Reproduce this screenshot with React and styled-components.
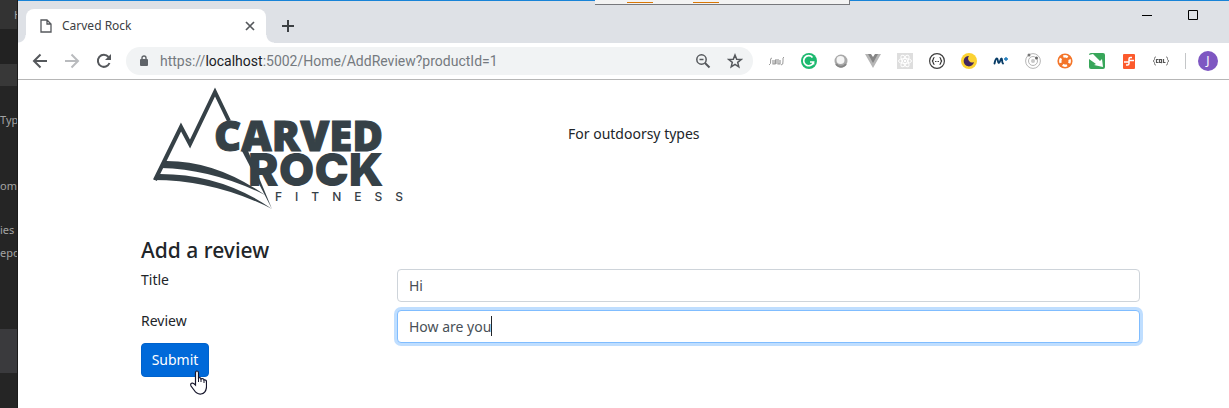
import React, { useState } from "react";
import styled, { createGlobalStyle, css } from "styled-components";

const Global = createGlobalStyle`
  *, *::before, *::after { box-sizing: border-box; }
  body {
    margin: 0;
    background: #252525;
    color: #212529;
    font: 14px/22px "Noto Sans", "Open Sans", sans-serif;
  }
  button, input { font: inherit; }
`;

const Desktop = styled.div`
  display: flex;
  min-height: 100vh;
`;

/* Editor window that shows behind the browser */
const Editor = styled.aside`
  flex: 0 0 18px;
  width: 18px;
  display: flex;
  flex-direction: column;
  overflow: hidden;
  background: #252525;
  border-right: 1px solid #1c1c1c;
  color: #a3a3a3;
  font-size: 11px;
  line-height: 22px;
  white-space: nowrap;
`;
const Strip = styled.div`
  flex: 0 0 ${(p) => p.$size}px;
  background: ${(p) => p.$tone || "transparent"};
  padding-left: ${(p) => p.$indent || 0}px;
  padding-top: ${(p) => p.$top || 0}px;
`;

const Browser = styled.div`
  flex: 1;
  min-width: 0;
  display: flex;
  flex-direction: column;
  position: relative;
  background: #fff;
  border-top: 1px solid #1883d7;
`;
const Popup = styled.div`
  position: absolute;
  top: -1px;
  left: 577px;
  width: 255px;
  height: 5px;
  padding: 2px 0 0 32px;
  display: flex;
  gap: 40px;
  background: #f3f3f3;
  border: solid #77787c;
  border-width: 0 1px 1px 0;
`;
const PopupMark = styled.span`
  width: 26px;
  height: 1px;
  background: #d97706;
`;

const TabBar = styled.div`
  display: flex;
  align-items: flex-end;
  height: 42px;
  padding-left: 8px;
  background: #dee1e6;
`;
const Tab = styled.div`
  position: relative;
  display: flex;
  align-items: center;
  width: 240px;
  height: 34px;
  padding: 0 8px 0 14px;
  gap: 10px;
  background: #fff;
  border-radius: 8px 8px 0 0;
  color: #3c4043;
  font-size: 12px;
  &::before, &::after {
    content: "";
    position: absolute;
    bottom: 0;
    width: 8px;
    height: 8px;
  }
  &::before {
    right: 100%;
    background: radial-gradient(circle at 0 0, #dee1e6 7px, #fff 8px);
  }
  &::after {
    left: 100%;
    background: radial-gradient(circle at 100% 0, #dee1e6 7px, #fff 8px);
  }
`;
const TabTitle = styled.span`
  flex: 1;
`;
const IconButton = styled.button`
  display: grid;
  place-items: center;
  flex: none;
  width: 16px;
  height: 16px;
  padding: 0;
  border: 0;
  background: none;
  color: #55585c;
  &:disabled { color: #b9bbbe; }
  svg { display: block; }
`;
const NewTab = styled(IconButton)`
  margin: 0 0 9px 14px;
`;
const WindowButtons = styled.div`
  display: flex;
  gap: 30px;
  margin: 0 28px 20px auto;
  button { color: #000; }
`;

const Toolbar = styled.div`
  display: flex;
  align-items: center;
  height: 37px;
  padding: 0 11px 0 14px;
  border-bottom: 1px solid #b6b6b6;
`;
const NavButtons = styled.div`
  display: flex;
  gap: 16px;
  margin-right: 14px;
`;
const AddressBar = styled.div`
  flex: 1;
  min-width: 0;
  display: flex;
  align-items: center;
  gap: 16px;
  height: 28px;
  padding: 0 10px 0 12px;
  border-radius: 14px;
  background: #f1f3f4;
`;
const Address = styled.div`
  flex: 1;
  min-width: 0;
  margin-left: -6px;
  overflow: hidden;
  white-space: nowrap;
  font-family: Roboto, "Noto Sans", sans-serif;
  color: #757a7f;
  b { font-weight: 400; color: #202124; }
`;
const Extensions = styled.div`
  display: flex;
  gap: 16px;
  margin-left: 16px;
`;
const Avatar = styled.button`
  width: 20px;
  height: 20px;
  margin-left: 12px;
  padding: 0;
  border: 0;
  border-radius: 50%;
  background: #7e57c2;
  color: #fff;
  font-size: 12px;
  line-height: 20px;
`;
const Divider = styled.span`
  width: 1px;
  height: 16px;
  margin-left: 16px;
  background: #c4c6c8;
`;

const Page = styled.main`
  flex: 1;
  padding: 4px 89px 30px 123px;
`;
const Header = styled.header`
  display: grid;
  grid-template-columns: 427px 1fr;
  height: 132px;
  p { margin: 39px 0 0; }
`;
const Logo = styled.svg`
  display: block;
  margin-left: 8px;
`;
const Heading = styled.h1`
  margin: 19px 0 4px;
  font-size: 21px;
  line-height: 30px;
  font-weight: 500;
`;
const Form = styled.form`
  display: flex;
  flex-direction: column;
`;
const Row = styled.div`
  display: grid;
  grid-template-columns: 256px 1fr;
  align-items: start;
  height: 33px;
  margin-bottom: ${(p) => (p.$last ? 0 : 8)}px;
`;
const InputWrap = styled.div`
  position: relative;
`;
const Input = styled.input`
  display: block;
  width: 100%;
  height: 33px;
  padding: 0 11px;
  border: 1px solid #ced4da;
  border-radius: 4px;
  background: #fff;
  color: #495057;
  outline: 0;
  ${(p) =>
    p.$active &&
    css`
      border-color: #80bdff;
      box-shadow: 0 0 0 3px rgba(0, 123, 255, 0.25);
    `}
`;
const Caret = styled.span`
  position: absolute;
  top: 6px;
  left: 94px;
  width: 1px;
  height: 20px;
  background: #212529;
`;
const Actions = styled.div`
  position: relative;
`;
const Submit = styled.button`
  display: block;
  width: 68px;
  height: 34px;
  padding: 0;
  border: 1px solid #0062cc;
  border-radius: 4px;
  background: #0069d9;
  color: #fff;
`;
const Pointer = styled.svg`
  position: absolute;
  top: 27px;
  left: 49px;
`;

const Icon = ({ size = 16, children, ...rest }) => (
  <svg width={size} height={size} viewBox={`0 0 ${size} ${size}`} fill="none" aria-hidden="true" {...rest}>
    {children}
  </svg>
);

const extensions = [
  ["Braces", <Icon><g stroke="#9a9a9a"><path d="M3 5Q1 5 1.600 8T0 12M15 4Q13.500 4 14 8T12 12" /><path d="M4 7v4h2V7M7 6v5M9 6v5h2V7" strokeWidth="1.200" /></g></Icon>],
  ["Grammar", <Icon><circle cx="8" cy="8" r="8" fill="#1db96f" /><path d="M11.500 4.500A5 5 0 1 0 12.500 9H9M12.500 9v2.500" stroke="#fff" strokeWidth="1.700" /></Icon>],
  ["Lens", <Icon><circle cx="8" cy="8" r="6.500" fill="#a9a9a9" /><path d="M3 11a6 6 0 0 0 10 0" stroke="#858585" strokeWidth="2" /><circle cx="7.500" cy="7" r="4" fill="#f5f5f5" /></Icon>],
  ["Vue", <Icon><path d="M0 1h4l4 7 4-7h4L8 15z" fill="#b6b6b6" /><path d="M3 1h3l2 3 2-3h3L8 10z" fill="#858585" /></Icon>],
  ["React", <Icon><path d="M0 0h16v16H0z" fill="#dedede" /><g stroke="#fff"><ellipse cx="8" cy="8" rx="6.500" ry="2.500" /><ellipse cx="8" cy="8" rx="6.500" ry="2.500" transform="rotate(60 8 8)" /><ellipse cx="8" cy="8" rx="6.500" ry="2.500" transform="rotate(120 8 8)" /></g><circle cx="8" cy="8" r="1.200" fill="#fff" /></Icon>],
  ["JSON", <Icon><circle cx="8" cy="8" r="7.400" stroke="#3f3f3f" strokeWidth="1.200" /><path d="M5.500 4.500C3.500 4.500 5 7.500 3 8c2 .5.500 3.500 2.500 3.500M10.500 4.500c2 0 .5 3 2.500 3.500-2 .5-.5 3.500-2.500 3.500" stroke="#333" strokeWidth="1.200" /><path d="M6 8.500h4" stroke="#444" strokeDasharray="1 .5" /></Icon>],
  ["Dark mode", <Icon><circle cx="8" cy="8" r="8" fill="#fbd232" /><path d="M8 3a4 4 0 0 0 5 6A5.200 5.200 0 1 1 8 3z" fill="#42265f" /></Icon>],
  ["Movistar", <Icon><path d="M1.500 10.500C2 8 3 5.500 4 5.500c1.200 0 .5 4.500 1.800 4.500s1.500-4.500 2.700-4.500S8.500 10 10 10.500" stroke="#073b66" strokeWidth="1.900" strokeLinecap="round" /><path d="M11 6h4M13 4v4" stroke="#1678ba" strokeWidth="1.300" /></Icon>],
  ["Orbit", <Icon><g stroke="#b5b5b5"><circle cx="8" cy="8" r="7.400" /><circle cx="8" cy="8" r="4.500" /></g><circle cx="8" cy="8" r="2" fill="#c8c8c8" /><circle cx="4" cy="2" r="1.500" fill="#777" /><circle cx="11.500" cy="5" r="1.500" fill="#666" /></Icon>],
  ["Support", <Icon><circle cx="8" cy="8" r="7.600" fill="#f47529" /><circle cx="8" cy="8" r="4.700" stroke="#fff" strokeWidth="2.400" strokeDasharray="4.600 2.780" strokeDashoffset="2.300" /></Icon>],
  ["Compass", <Icon><rect width="16" height="16" rx="2" fill="#38a65a" /><path d="M0 2l4-1 7 7 2-2 1 8-9-2 2-1-7-5z" fill="#fff" /></Icon>],
  ["Switch", <Icon><rect x="2" y="1" width="12" height="15" rx="1" fill="#fc5a2c" /><path d="M11 4.500H9.500Q8 4.500 8 6V10.500Q8 12 6.500 12H5M3 9h5M8 7.500h5" stroke="#fff" strokeWidth="1.500" /></Icon>],
  ["Query", <Icon><g stroke="#555"><path d="M3 4C0 4 3 7 0 8c3 1 0 4 3 4M13 4c3 0 0 3 3 4-3 1 0 4-3 4" strokeWidth=".8" /><path d="M5.500 6.500h-2v3h2M6.500 6.500h2v3h-2zM8 9l1 1M10.500 6v3.500h2" strokeWidth="1.200" /></g></Icon>],
];

function CarvedRockLogo() {
  return (
    <Logo width="260" height="130" viewBox="149 84 260 130" role="img" aria-label="Carved Rock Fitness">
      <path d="M155 180L181 127L190 144L215 92L229 121" fill="none" stroke="#364147" strokeWidth="4" />
      <g fill="#364147">
        <path d="M164 161Q215 160 265 195Q212 169 161 168Z" />
        <path d="M153 180L160 174Q222 174 272 209Q215 180 153 180Z" />
        <path d="M242 151H248L272 209Z" />
        <text x="214" y="151" fontFamily='"Open Sans", sans-serif' fontWeight="800" fontSize="42" stroke="#364147">CARVED</text>
        <text x="248" y="186" fontFamily="Inter, sans-serif" fontWeight="900" fontSize="46">ROCK</text>
        <text x="275" y="201" fontFamily="Inter, sans-serif" fontWeight="500" fontSize="12" letterSpacing="13">FITNESS</text>
      </g>
    </Logo>
  );
}

export default function App() {
  const [title, setTitle] = useState("Hi");
  const [review, setReview] = useState("How are you");
  return (
    <>
      <Global />
      <Desktop>
        <Editor>
          <Strip $size={29} $tone="#333" $indent={14} $top={4}>H</Strip>
          <Strip $size={35} $tone="#222" />
          <Strip $size={22} $tone="#383838" />
          <Strip $size={66} $top={23}>Type</Strip>
          <Strip $size={66} $top={23}>ome</Strip>
          <Strip $size={22} $top={1}>ies</Strip>
          <Strip $size={88} $top={1}>epo</Strip>
          <Strip $size={44} $tone="#3a3a3d" />
        </Editor>
        <Browser>
          <TabBar>
            <Tab>
              <Icon size={12} height="14" viewBox="0 0 12 14" stroke="#55585c" strokeWidth="1.300">
                <path d="M1 1h6l4 4v8H1zM7 1v4h4" />
              </Icon>
              <TabTitle>Carved Rock</TabTitle>
              <IconButton aria-label="Close tab">
                <Icon stroke="currentColor" strokeWidth="1.700"><path d="M4 4l8 8M12 4l-8 8" /></Icon>
              </IconButton>
            </Tab>
            <NewTab aria-label="New tab">
              <Icon stroke="#3c4043" strokeWidth="2"><path d="M8 2v12M2 8h12" /></Icon>
            </NewTab>
            <WindowButtons>
              <IconButton aria-label="Minimize">
                <Icon stroke="currentColor"><path d="M3 8.500h10" /></Icon>
              </IconButton>
              <IconButton aria-label="Maximize">
                <Icon stroke="currentColor"><path d="M3.500 3.500h9v9h-9z" /></Icon>
              </IconButton>
            </WindowButtons>
          </TabBar>
          <Toolbar>
            <NavButtons>
              <IconButton aria-label="Back">
                <Icon stroke="currentColor" strokeWidth="2"><path d="M15 8H2M8.500 1.500L2 8l6.500 6.500" /></Icon>
              </IconButton>
              <IconButton aria-label="Forward" disabled>
                <Icon stroke="currentColor" strokeWidth="2"><path d="M1 8h13M7.500 1.500L14 8l-6.500 6.500" /></Icon>
              </IconButton>
              <IconButton aria-label="Reload">
                <Icon><path d="M13.500 10A6 6 0 1 1 12.500 4" stroke="currentColor" strokeWidth="2" /><path d="M15 1v6H9z" fill="currentColor" /></Icon>
              </IconButton>
            </NavButtons>
            <AddressBar>
              <Icon size={12}>
                <rect x="2" y="4" width="8" height="7" rx="1" fill="#5f6368" />
                <path d="M4 5V3a2 2 0 0 1 4 0v2" stroke="#5f6368" strokeWidth="1.400" />
              </Icon>
              <Address>https://<b>localhost</b>:5002/Home/AddReview?productId=1</Address>
              <IconButton aria-label="Zoom">
                <Icon stroke="currentColor" strokeWidth="1.500"><circle cx="6.500" cy="6.500" r="4.700" /><path d="M10 10l4.500 4.500" strokeWidth="2" /><path d="M4.500 6.500h4" /></Icon>
              </IconButton>
              <IconButton aria-label="Bookmark this page">
                <Icon stroke="currentColor" strokeWidth="1.500"><path d="M8 2l1.700 4.200 4.500.3-3.500 2.900 1.100 4.400L8 11.400l-3.800 2.400 1.100-4.400-3.500-2.900 4.500-.3z" /></Icon>
              </IconButton>
            </AddressBar>
            <Extensions>
              {extensions.map(([name, drawing]) => (
                <IconButton key={name} aria-label={name}>{drawing}</IconButton>
              ))}
            </Extensions>
            <Divider />
            <Avatar aria-label="Profile">J</Avatar>
          </Toolbar>
          <Page>
            <Header>
              <CarvedRockLogo />
              <p>For outdoorsy types</p>
            </Header>
            <Heading>Add a review</Heading>
            <Form onSubmit={(e) => e.preventDefault()}>
              <Row>
                <label htmlFor="title">Title</label>
                <Input id="title" value={title} onChange={(e) => setTitle(e.target.value)} />
              </Row>
              <Row $last>
                <label htmlFor="review">Review</label>
                <InputWrap>
                  <Input id="review" $active value={review} onChange={(e) => setReview(e.target.value)} />
                  <Caret />
                </InputWrap>
              </Row>
              <Actions>
                <Submit>Submit</Submit>
                <Pointer width="17" height="26" viewBox="0 0 17 26" aria-hidden="true">
                  <path d="M5.500 15V3Q5.500 1 7 1T8.500 3V8Q10.500 7 11 9Q13.500 8 14 10Q16.500 9.500 16.500 12V17Q16 23 11 24Q7 24.500 4 20L1 16Q0 13 2.500 13Q4 13.500 5.500 15Z" fill="#fff" stroke="#15152b" strokeWidth="1.200" />
                  <path d="M8.500 8v4M11 9v3M14 10v3" stroke="#15152b" />
                </Pointer>
              </Actions>
            </Form>
          </Page>
          <Popup>
            <PopupMark />
            <PopupMark />
          </Popup>
        </Browser>
      </Desktop>
    </>
  );
}
